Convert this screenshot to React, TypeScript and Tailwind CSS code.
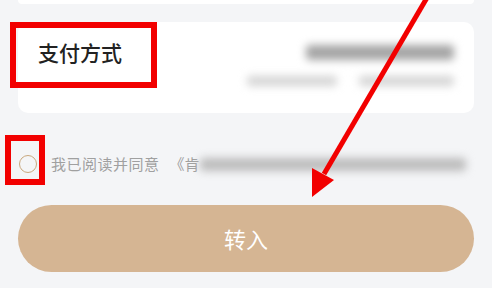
import React from 'react';

const font = { fontFamily: '"Noto Sans CJK SC", "Noto Sans", sans-serif' };

export default function App() {
  return (
    <div
      className="relative h-[288px] w-[492px] overflow-hidden bg-[#f4f5f7]"
      style={font}
    >
      {/* previous card tail */}
      <div className="mx-[18px] h-[4px] rounded-b-[10px] bg-white" />

      {/* payment card */}
      <div className="relative mx-[18px] mt-[18px] flex h-[91px] items-start justify-between rounded-[10px] bg-white px-5">
        <div className="pt-[16px] text-[21px] font-medium leading-[28px] text-[#222]">
          支付方式
        </div>
        <div className="flex flex-col items-end pt-[23px] blur-[4px]">
          <div className="h-[15px] w-[148px] rounded bg-[#a4a4a4]" />
          <div className="mt-[16px] flex gap-[22px]">
            <div className="h-[10px] w-[90px] rounded bg-[#d4d4d4]" />
            <div className="h-[10px] w-[95px] rounded bg-[#d4d4d4]" />
          </div>
        </div>
        {/* annotation box */}
        <div className="absolute left-[-8px] top-0 h-[66px] w-[147px] border-[6px] border-[#f20000]" />
      </div>

      {/* agreement row */}
      <div className="relative mt-[40px] flex h-[22px] items-center pl-[19px]">
        <div className="h-[18px] w-[18px] rounded-full border-[1.5px] border-[#c9a87e]" />
        <span className="ml-[14px] text-[15px] tracking-[0.5px] text-[#a0a0a0]">我已阅读并同意</span>
        <span className="ml-[10px] text-[15px] text-[#a0a0a0]">《肯</span>
        <div className="h-[13px] w-[266px] rounded bg-[#bcbcbc] blur-[4px]" />
        <div className="absolute left-[5px] top-[-18px] h-[50px] w-[40px] border-[6px] border-[#f20000]" />
      </div>

      {/* submit */}
      <div className="mx-[18px] mt-[30px] flex h-[67px] items-center justify-center rounded-full bg-[#d5b593] text-[22px] text-white">
        转入
      </div>

      {/* arrow annotation */}
      <svg
        className="pointer-events-none absolute left-0 top-0"
        width="492"
        height="288"
        viewBox="0 0 492 288"
      >
        <line x1="428" y1="-4" x2="324" y2="174" stroke="#f20000" strokeWidth="5" />
        <polygon points="312,197 312,168 334,180" fill="#f20000" />
      </svg>
    </div>
  );
}
